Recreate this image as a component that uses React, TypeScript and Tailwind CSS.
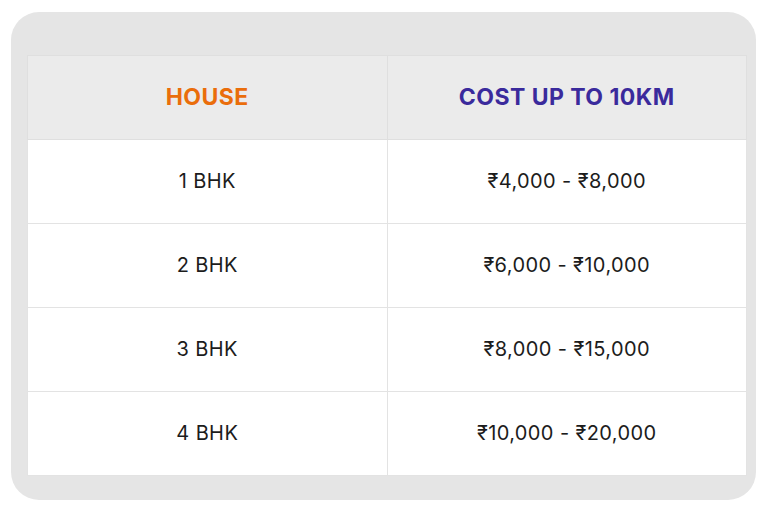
const rows = [
  { house: "1 BHK", cost: "₹4,000 - ₹8,000" },
  { house: "2 BHK", cost: "₹6,000 - ₹10,000" },
  { house: "3 BHK", cost: "₹8,000 - ₹15,000" },
  { house: "4 BHK", cost: "₹10,000 - ₹20,000" },
];

const App = () => {
  return (
    <div className="min-h-[512px] w-[768px] bg-white pl-[11px] pt-[12px] font-['Inter','Noto_Sans',sans-serif]">
      <div className="w-[745px] rounded-[28px] bg-[#e5e5e5] pb-[24px] pl-[16px] pr-[9px] pt-[43px]">
        <table className="w-[720px] table-fixed border-collapse">
          <thead>
            <tr className="h-[84px] bg-[#ebebeb]">
              <th className="border border-[#dfdfdf] pb-[1px] text-center text-[23px] font-bold tracking-[0.02em] text-[#ea6d0b]">
                HOUSE
              </th>
              <th className="border border-[#dfdfdf] pb-[1px] text-center text-[23px] font-bold tracking-[0.02em] text-[#3a2a9c]">
                COST UP TO 10KM
              </th>
            </tr>
          </thead>
          <tbody>
            {rows.map((row) => (
              <tr key={row.house} className="h-[84px] bg-white">
                <td className="border border-[#e3e3e3] pb-[1px] text-center text-[20px] tracking-[0.02em] text-[#1c1c1c]">
                  {row.house}
                </td>
                <td className="border border-[#e3e3e3] pb-[1px] text-center text-[20px] tracking-[0.02em] text-[#1c1c1c]">
                  {row.cost}
                </td>
              </tr>
            ))}
          </tbody>
        </table>
      </div>
    </div>
  );
};

export default App;
